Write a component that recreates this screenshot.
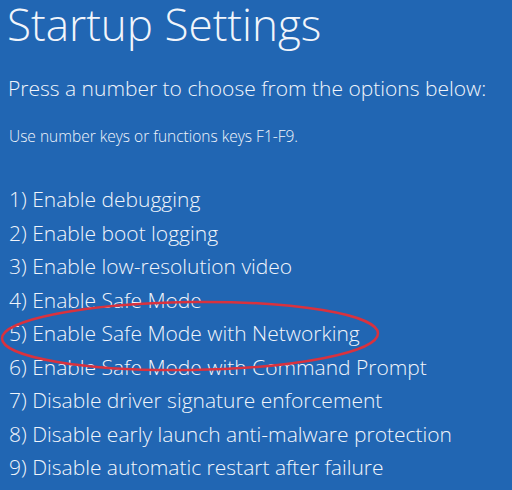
import React from 'react';

const options = [
  '1) Enable debugging',
  '2) Enable boot logging',
  '3) Enable low-resolution video',
  '4) Enable Safe Mode',
  '5) Enable Safe Mode with Networking',
  '6) Enable Safe Mode with Command Prompt',
  '7) Disable driver signature enforcement',
  '8) Disable early launch anti-malware protection',
  '9) Disable automatic restart after failure',
];

const App: React.FC = () => {
  return (
    <div
      className="relative w-[512px] h-[490px] overflow-hidden bg-[#2166b3] text-[#f1f5fb] px-[8px]"
      style={{ fontFamily: '"Open Sans", "Noto Sans", sans-serif' }}
    >
      <h1 className="text-[44px] leading-[48px] font-light -ml-[1px]">Startup Settings</h1>
      <p className="mt-[26px] text-[21px] leading-[28px] font-light">
        Press a number to choose from the options below:
      </p>
      <p className="mt-[24px] text-[15.5px] leading-[20px] font-light pl-[1px]">
        Use number keys or functions keys F1-F9.
      </p>

      {/* Options list */}
      <ul className="mt-[37px] pl-[1px]">
        {options.map((opt) => (
          <li key={opt} className="text-[21px] leading-[33.5px] font-light whitespace-nowrap">
            {opt}
          </li>
        ))}
      </ul>

      {/* Red highlight ring drawn over option 5 */}
      <svg
        className="absolute left-0 top-0 pointer-events-none"
        width="512"
        height="490"
        viewBox="0 0 512 490"
      >
        <ellipse
          cx="190"
          cy="336"
          rx="188"
          ry="34"
          fill="none"
          stroke="#d9323e"
          strokeWidth="2.5"
          transform="rotate(-0.8 190 336)"
        />
      </svg>
    </div>
  );
};

export default App;
